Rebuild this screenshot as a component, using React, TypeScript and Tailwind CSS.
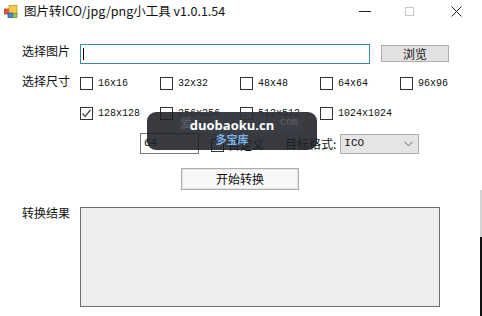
import React, { useState } from "react";

const cjk = "font-['Noto_Sans_CJK_SC',sans-serif]";
const mono = "font-['Liberation_Mono','DejaVu_Sans_Mono',monospace]";

const sizes = [
  ["16x16", "32x32", "48x48", "64x64", "96x96"],
  ["128x128", "256x256", "512x512", "1024x1024"],
];

function Box({ checked }: { checked?: boolean }) {
  return (
    <div className="w-[13px] h-[13px] border border-[#333] bg-white flex items-center justify-center shrink-0">
      {checked && (
        <svg width="11" height="11" viewBox="0 0 11 11">
          <path d="M1.5 5.5 L4.2 8.3 L9.5 1.8" fill="none" stroke="#333" strokeWidth="1.2" />
        </svg>
      )}
    </div>
  );
}

function AppIcon() {
  return (
    <svg width="14" height="13" viewBox="0 0 14 13">
      <rect x="0.5" y="4" width="5" height="5" fill="#e8533a" stroke="#b83a24" strokeWidth="0.8" />
      <rect x="5" y="0.5" width="8" height="8" fill="#f6c94a" stroke="#c99a1e" strokeWidth="0.8" />
      <rect x="4" y="8" width="5" height="4.5" fill="#4a86d8" stroke="#2c5fa8" strokeWidth="0.8" />
      <rect x="9" y="8.5" width="4" height="4" fill="#9cc36a" stroke="#6b9a3a" strokeWidth="0.8" />
    </svg>
  );
}

export default function App() {
  const [checked] = useState<string[]>(["128x128"]);

  return (
    <div className={`w-[482px] h-[316px] bg-white flex overflow-hidden text-[#111] ${cjk}`}>
      <div className="relative flex-1 flex flex-col">
        {/* title bar */}
        <div className="h-[22px] flex items-center">
          <div className="ml-[4px] mt-[1px]">
            <AppIcon />
          </div>
          <span className="ml-[6px] text-[12.5px] leading-[14px]">图片转ICO/jpg/png小工具 v1.0.1.54</span>
          <div className="ml-auto flex items-center">
            <div className="w-[12px] h-[1px] bg-[#222] mr-[34px]" />
            <div className="w-[9px] h-[9px] border border-[#c8c8c8] mr-[37px]" />
            <svg width="11" height="11" viewBox="0 0 11 11" className="mr-[18px]">
              <path d="M0.5 0.5 L10.5 10.5 M10.5 0.5 L0.5 10.5" stroke="#222" strokeWidth="1" />
            </svg>
          </div>
        </div>

        <div className="pl-[22px] flex flex-col">
          {/* row 1 */}
          <div className="mt-[22px] flex items-start h-[20px]">
            <span className="w-[58px] text-[12px] leading-[14px]">选择图片</span>
            <div className="w-[290px] h-[20px] border border-[#3c8aa8] bg-white flex items-center pl-[2px]">
              <div className="w-[1px] h-[12px] bg-black" />
            </div>
            <button className="ml-[11px] mt-[1px] w-[68px] h-[17px] bg-[#e1e1e1] border border-[#adadad] text-[12px] leading-[14px]">
              浏览
            </button>
          </div>

          {/* row 2 + 3 */}
          {sizes.map((row, i) => (
            <div key={i} className={`flex items-start ${i === 0 ? "mt-[10px]" : "mt-[14px]"} h-[16px]`}>
              <span className="w-[58px] text-[12px] leading-[14px]">{i === 0 ? "选择尺寸" : ""}</span>
              <div className="grid grid-cols-[80px_80px_80px_80px_80px] pt-[3px]">
                {row.map((s) => (
                  <div key={s} className="flex items-center">
                    <Box checked={checked.includes(s)} />
                    <span className={`ml-[5px] text-[10px] leading-[12px] ${mono}`}>{s}</span>
                  </div>
                ))}
              </div>
            </div>
          ))}

          {/* row 4 */}
          <div className="mt-[13px] pl-[118px] flex items-center h-[21px]">
            <div className={`w-[59px] h-[21px] border border-[#7a7a7a] bg-white flex items-center pl-[3px] text-[11px] ${mono}`}>
              64
            </div>
            <div className="ml-[12px] mt-[3px]">
              <Box />
            </div>
            <span className="ml-[4px] text-[12px] leading-[14px] mt-[3px]">自定义</span>
            <span className="ml-[21px] text-[12px] leading-[14px]">目标格式:</span>
            <div className="ml-[4px] w-[79px] h-[20px] bg-[#e5e5e5] border border-[#acacac] flex items-center px-[3px]">
              <span className={`text-[11px] ${mono}`}>ICO</span>
              <svg width="9" height="6" viewBox="0 0 9 6" className="ml-auto mr-[2px]">
                <path d="M0.5 0.8 L4.5 4.8 L8.5 0.8" fill="none" stroke="#666" strokeWidth="1" />
              </svg>
            </div>
          </div>

          {/* row 5 */}
          <div className="mt-[11px] pl-[159px]">
            <button className="w-[118px] h-[22px] bg-[#f7f7f7] border border-[#adadad] shadow-[inset_0_0_0_1px_#e6e6e6] text-[12px] leading-[14px]">
              开始转换
            </button>
          </div>

          {/* row 6 */}
          <div className="mt-[16px] flex items-start">
            <span className="w-[58px] text-[12px] leading-[14px]">转换结果</span>
            <div className="mt-[1px] w-[360px] h-[100px] bg-[#efedf0] border border-[#6e6e6e]" />
          </div>
        </div>

        {/* watermark overlay */}
        <div className="absolute left-[147px] top-[112px] w-[170px] h-[38px] rounded-[9px] bg-[rgba(28,31,38,0.88)] overflow-hidden">
          <div className="absolute left-[28px] top-0 w-[128px] h-[21px] bg-[rgba(60,64,72,0.5)] flex items-center justify-between px-[5px]">
            <span className="text-[12px] text-[#5d616a]">爱</span>
            <span className={`text-[10px] text-[#5d616a] ${mono}`}>com</span>
          </div>
          <div className="relative flex flex-col items-center pt-[6px]">
            <span className="text-[13px] leading-[15px] font-bold text-white font-['Open_Sans',sans-serif]">
              duobaoku.cn
            </span>
            <span className="text-[11px] leading-[13px] font-bold text-[#79b0e8]">多宝库</span>
          </div>
        </div>
      </div>

      {/* right window edge */}
      <div className="w-[2px] flex flex-col">
        <div className="h-[190px] bg-white" />
        <div className="h-[47px] bg-[#d4d4d4]" />
        <div className="flex-1 bg-[#111]" />
      </div>
    </div>
  );
}
